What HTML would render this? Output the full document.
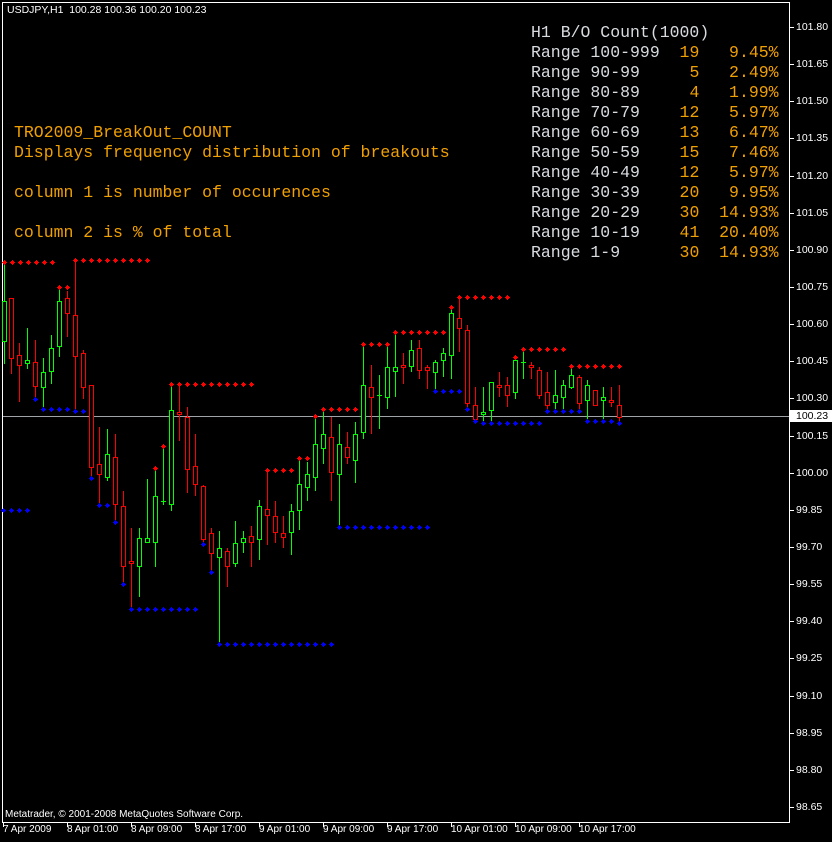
<!DOCTYPE html>
<html><head><meta charset="utf-8"><style>
html,body{margin:0;padding:0;background:#000;width:832px;height:842px;overflow:hidden}
.t{position:absolute;font-family:"Liberation Sans",sans-serif;font-size:10.5px;color:#fff;white-space:pre;line-height:12px}
.m{position:absolute;font-family:"Liberation Mono",monospace;font-size:16.5px;white-space:pre;line-height:20px;margin:0}
.o{color:#f0a000}
.w{color:#d8dce0}
</style></head><body>
<svg id="s" width="832" height="842" style="position:absolute;left:0;top:0" shape-rendering="crispEdges">
<line x1="2.5" y1="2" x2="2.5" y2="823" stroke="#fff"/>
<line x1="2" y1="2.5" x2="790" y2="2.5" stroke="#fff"/>
<line x1="789.5" y1="2" x2="789.5" y2="823" stroke="#fff"/>
<line x1="2" y1="822.5" x2="790" y2="822.5" stroke="#fff"/>
<line x1="3" y1="416.5" x2="789" y2="416.5" stroke="#a0a4a8"/>
<g id="c"></g>
</svg>
<div class="t" style="left:7px;top:4px">USDJPY,H1  100.28 100.36 100.20 100.23</div>
<div class="t" style="left:5px;top:809px;font-size:10px">Metatrader, © 2001-2008 MetaQuotes Software Corp.</div>
<div id="ax"></div>
<pre class="m w" style="left:531px;top:23px">H1 B/O Count(1000)
Range 100-999<span class="o">  19   9.45%</span>
Range 90-99  <span class="o">   5   2.49%</span>
Range 80-89  <span class="o">   4   1.99%</span>
Range 70-79  <span class="o">  12   5.97%</span>
Range 60-69  <span class="o">  13   6.47%</span>
Range 50-59  <span class="o">  15   7.46%</span>
Range 40-49  <span class="o">  12   5.97%</span>
Range 30-39  <span class="o">  20   9.95%</span>
Range 20-29  <span class="o">  30  14.93%</span>
Range 10-19  <span class="o">  41  20.40%</span>
Range 1-9    <span class="o">  30  14.93%</span></pre>
<pre class="m o" style="left:14px;top:123px">TRO2009_BreakOut_COUNT
Displays frequency distribution of breakouts

column 1 is number of occurences

column 2 is % of total</pre>
<script>
var NS="http://www.w3.org/2000/svg",g=document.getElementById('c'),s=document.getElementById('s');
function el(t,a,p){var e=document.createElementNS(NS,t);for(var k in a)e.setAttribute(k,a[k]);(p||g).appendChild(e);return e;}
var C=[[4,'g',301,341,263,363],[11,'r',298,358,298,373],[19,'r',355,365,343,401],[27,'g',360,363,328,368],[35,'r',362,386,340,398],[43,'g',372,387,358,410],[51,'g',348,371,335,383],[59,'g',301,346,286,356],[67,'r',298,313,291,336],[75,'r',315,356,260,410],[83,'r',353,387,350,398],[91,'r',385,467,385,478],[99,'r',464,474,427,503],[107,'g',454,477,429,480],[115,'r',457,504,434,522],[123,'r',506,566,491,583],[131,'r',561,563,528,607],[139,'g',538,566,528,596],[147,'g',538,542,479,542],[155,'g',496,542,468,566],[163,'g',501,502,447,504],[171,'g',410,504,384,510],[179,'r',412,414,387,440],[187,'r',417,469,407,492],[195,'r',466,484,434,495],[203,'r',486,539,485,543],[211,'r',533,553,528,572],[219,'g',548,557,531,644],[227,'r',551,566,548,586],[235,'g',543,563,521,566],[243,'g',538,542,531,552],[251,'r',536,542,526,566],[259,'g',506,539,500,559],[267,'r',509,515,470,544],[275,'r',516,532,501,542],[283,'r',533,537,516,547],[291,'g',511,532,504,554],[299,'g',484,510,458,529],[307,'g',474,487,462,500],[315,'g',444,477,416,490],[323,'g',434,448,410,463],[331,'r',437,472,417,500],[339,'g',444,474,424,528],[347,'r',447,457,432,463],[355,'g',434,460,422,482],[363,'g',385,432,344,438],[371,'r',387,397,365,433],[379,'g',395,396,375,428],[387,'g',367,397,344,408],[395,'g',367,371,332,396],[403,'r',365,367,353,383],[411,'g',350,366,340,371],[419,'r',348,370,340,378],[427,'r',367,370,365,388],[435,'g',362,372,360,392],[443,'g',353,360,348,376],[451,'g',313,355,307,378],[459,'r',318,328,297,351],[467,'r',330,403,325,408],[475,'r',405,419,387,421],[483,'g',412,414,387,424],[491,'g',382,410,382,423],[499,'r',385,387,372,396],[507,'r',385,395,377,406],[515,'g',360,392,357,398],[523,'g',362,363,349,378],[531,'r',365,367,362,378],[539,'r',370,395,367,398],[547,'r',392,405,372,409],[555,'g',395,402,370,408],[563,'g',385,397,380,413],[571,'g',375,387,367,388],[579,'r',377,403,375,408],[587,'g',385,400,380,423],[595,'r',390,405,390,405],[603,'g',397,400,387,418],[611,'r',400,402,387,406],[619,'r',405,417,385,421]];
C.forEach(function(c){var col=c[1]=='g'?'#00ff00':'#ff0000',x=c[0];
el('line',{x1:x+.5,y1:c[4],x2:x+.5,y2:c[5]+1,stroke:col});
if(c[3]-c[2]<2){el('line',{x1:x-2,y1:c[2]+.5,x2:x+3,y2:c[2]+.5,stroke:col});}
else el('rect',{x:x-1.5,y:c[2]+.5,width:4,height:c[3]-c[2],fill:'#000',stroke:col});});
var D=[[262,4,52,'r'],[260,75,147,'r'],[287,59,67,'r'],[384,171,251,'r'],[446,163,163,'r'],[468,155,155,'r'],[470,267,291,'r'],[458,299,307,'r'],[416,315,315,'r'],[409,323,355,'r'],[344,363,387,'r'],[332,395,443,'r'],[307,451,451,'r'],[297,459,507,'r'],[357,515,515,'r'],[349,523,563,'r'],[366,571,619,'r'],
[510,3,27,'b'],[399,35,35,'b'],[409,43,67,'b'],[411,75,83,'b'],[478,91,91,'b'],[505,99,107,'b'],[522,115,115,'b'],[584,123,123,'b'],[609,131,195,'b'],[544,203,203,'b'],[572,211,211,'b'],[644,219,331,'b'],[527,339,427,'b'],[391,435,459,'b'],[409,467,467,'b'],[421,475,475,'b'],[423,483,539,'b'],[411,547,579,'b'],[421,587,611,'b'],[423,619,619,'b']];
D.forEach(function(d){var col=d[3]=='r'?'#ff0000':'#0000ff';for(var x=d[1];x<=d[2];x+=8){
el('rect',{x:x-1,y:d[0]-1,width:3,height:3,fill:col});el('rect',{x:x,y:d[0]-2,width:1,height:5,fill:col});el('rect',{x:x-2,y:d[0],width:5,height:1,fill:col});}});
var ax=document.getElementById('ax'),L=['101.80','101.65','101.50','101.35','101.20','101.05','100.90','100.75','100.60','100.45','100.30','100.15','100.00','99.85','99.70','99.55','99.40','99.25','99.10','98.95','98.80','98.65'];
L.forEach(function(l,i){var y=Math.round(27+i*37.14);el('line',{x1:790,y1:y+.5,x2:794,y2:y+.5,stroke:'#fff'},s);
var d=document.createElement('div');d.className='t';d.style.left='796px';d.style.top=(y-6)+'px';d.textContent=l;ax.appendChild(d);});
var b=document.createElement('div');b.className='t';b.style.cssText='left:790px;top:410px;background:#fff;color:#000;padding:0 5px 0 6px;height:12px';b.textContent='100.23';ax.appendChild(b);
var T=['7 Apr 2009','8 Apr 01:00','8 Apr 09:00','8 Apr 17:00','9 Apr 01:00','9 Apr 09:00','9 Apr 17:00','10 Apr 01:00','10 Apr 09:00','10 Apr 17:00'];
T.forEach(function(t,i){var x=3+i*64;el('line',{x1:x+.5,y1:823,x2:x+.5,y2:827,stroke:'#fff'},s);var d=document.createElement('div');d.className='t';d.style.left=x+'px';d.style.top='824px';d.style.fontSize='10px';d.textContent=t;ax.appendChild(d);});
</script>
</body></html>
